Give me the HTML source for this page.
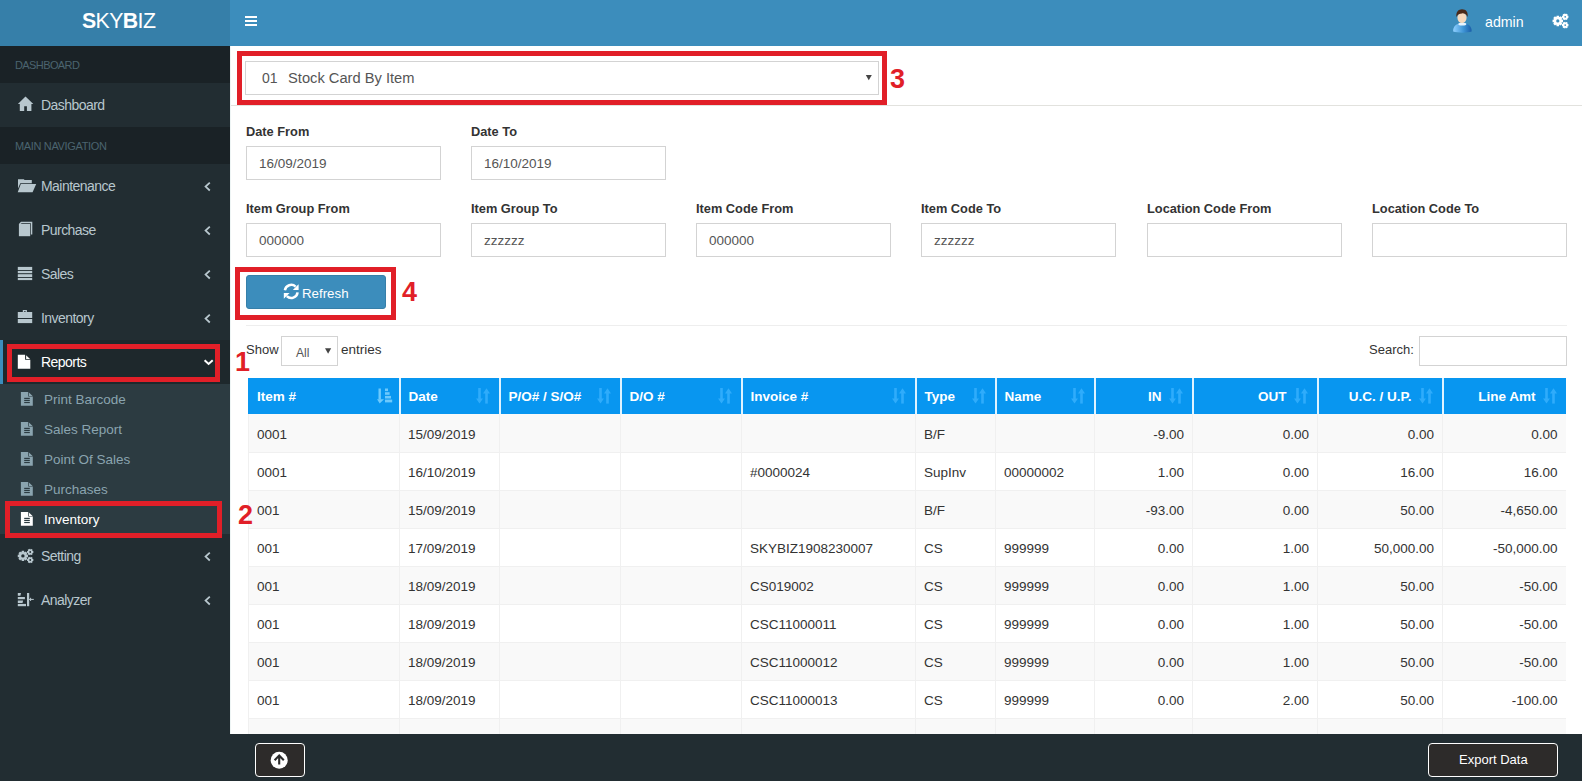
<!DOCTYPE html>
<html><head><meta charset="utf-8">
<style>
*{box-sizing:border-box;margin:0;padding:0}
html,body{width:1582px;height:781px;overflow:hidden;background:#fff;font-family:"Liberation Sans",sans-serif;color:#333}
.a{position:absolute}
.t{position:absolute;white-space:nowrap;line-height:20px}
#logo{left:0;top:0;width:230px;height:46px;background:#367fa9}
#nav{left:230px;top:0;width:1352px;height:46px;background:#3c8dbc}
#side{left:0;top:46px;width:230px;height:735px;background:#222d32}
.hdr{left:0;width:230px;height:37px;background:#1a2226}
.hdr span{position:absolute;left:15px;top:9px;font-size:11px;line-height:20px;color:#4b646f;letter-spacing:-0.6px}
.mi{left:0;width:230px;height:44px}
.mi .tx{position:absolute;left:41px;top:12px;font-size:14px;line-height:20px;color:#b8c7ce;letter-spacing:-0.55px}
.mi svg.ic{position:absolute}
.chev{position:absolute;left:203px;top:17px}
.sub{left:0;width:230px;height:30px}
.sub .tx{position:absolute;left:44px;top:6px;font-size:13.5px;line-height:20px;color:#8aa4af}
.sub svg{position:absolute;left:21px;top:8px}
.red{position:absolute;border:5px solid #e11f28}
.num{position:absolute;font-weight:bold;font-size:27px;line-height:30px;color:#e11f28}
.lbl{position:absolute;font-size:12.8px;font-weight:bold;line-height:20px;color:#333}
.inp{position:absolute;width:195px;height:34px;border:1px solid #d3d3d3;background:#fff}
.inp span{position:absolute;left:12px;top:7px;font-size:13.5px;line-height:20px;color:#555}
#tbl{border-collapse:collapse;table-layout:fixed;width:1317px;font-size:13.5px}
#tbl th{height:36px;background:#0896f0;color:#fff;font-weight:bold;text-align:left;padding:0 30px 0 8px;border-left:2px solid #dff3ff;position:relative;white-space:nowrap}
#tbl th:first-child{border-left:1px solid #0896f0}
#tbl th.r,#tbl td.r{text-align:right}
#tbl td{height:38px;padding:3px 8px 0 8px;border-left:1px solid #f0f0f0;border-bottom:1px solid #f0f0f0;color:#333;white-space:nowrap}
#tbl tr.odd td{background:#f9f9f9}
</style></head><body>
<div id="logo" class="a"><span class="t" style="left:82px;top:10.5px;font-size:21.3px;color:#fff;letter-spacing:-0.6px"><b>S</b>KY<b>B</b>IZ</span></div>
<div id="nav" class="a">
  <div class="a" style="left:15px;top:16px;width:12px;height:2px;background:#fff"></div>
  <div class="a" style="left:15px;top:20px;width:12px;height:2px;background:#fff"></div>
  <div class="a" style="left:15px;top:24px;width:12px;height:2px;background:#fff"></div>
  <span class="t" style="left:1255px;top:12px;font-size:14.2px;color:#fff">admin</span>
</div>
<svg class="a" style="left:1440px;top:0" width="142" height="46" viewBox="1440 0 142 46"><defs><linearGradient id="bd" x1="0" x2="1" y1="0" y2="0"><stop offset="0" stop-color="#8fd0ff"/><stop offset="0.55" stop-color="#3f95d6"/><stop offset="1" stop-color="#1a5ea8"/></linearGradient></defs><path fill="url(#bd)" d="M1453.2 31.5C1452.8 26.5 1456 23.2 1462.3 23.2C1468.6 23.2 1472 26.5 1471.6 31.5C1468 33 1457 33 1453.2 31.5Z"/><ellipse cx="1462.3" cy="24" rx="4" ry="1.6" fill="#e8f4ff"/><ellipse cx="1462" cy="17.8" rx="4.6" ry="5.2" fill="#f6d9bd"/><path fill="#4a2a1a" d="M1456.4 17C1455.8 12 1458.5 9.3 1462 9.3C1466 9.3 1468.3 12 1467.6 17C1466.5 14 1464 13.2 1462 13.4C1459.6 13.4 1457.4 14.5 1456.4 17Z"/><path fill="#fff" fill-rule="evenodd" d="M1563.05 19.64L1563.05 22.16L1561.77 22.28L1561.58 22.73L1562.40 23.72L1560.62 25.50L1559.63 24.68L1559.18 24.87L1559.06 26.15L1556.54 26.15L1556.42 24.87L1555.97 24.68L1554.98 25.50L1553.20 23.72L1554.02 22.73L1553.83 22.28L1552.55 22.16L1552.55 19.64L1553.83 19.52L1554.02 19.07L1553.20 18.08L1554.98 16.30L1555.97 17.12L1556.42 16.93L1556.54 15.65L1559.06 15.65L1559.18 16.93L1559.63 17.12L1560.62 16.30L1562.40 18.08L1561.58 19.07L1561.77 19.52ZM1559.40 20.90A1.6 1.6 0 1 0 1556.20 20.90A1.6 1.6 0 1 0 1559.40 20.90Z"/><path fill="#fff" fill-rule="evenodd" d="M1568.43 15.75L1568.43 17.85L1567.64 17.96L1567.43 18.33L1567.73 19.08L1565.91 20.13L1565.41 19.49L1564.99 19.49L1564.49 20.13L1562.67 19.08L1562.97 18.33L1562.76 17.96L1561.97 17.85L1561.97 15.75L1562.76 15.64L1562.97 15.27L1562.67 14.52L1564.49 13.47L1564.99 14.11L1565.41 14.11L1565.91 13.47L1567.73 14.52L1567.43 15.27L1567.64 15.64ZM1566.05 16.80A0.85 0.85 0 1 0 1564.35 16.80A0.85 0.85 0 1 0 1566.05 16.80Z"/><path fill="#fff" fill-rule="evenodd" d="M1568.43 24.05L1568.43 26.15L1567.64 26.26L1567.43 26.63L1567.73 27.38L1565.91 28.43L1565.41 27.79L1564.99 27.79L1564.49 28.43L1562.67 27.38L1562.97 26.63L1562.76 26.26L1561.97 26.15L1561.97 24.05L1562.76 23.94L1562.97 23.57L1562.67 22.82L1564.49 21.77L1564.99 22.41L1565.41 22.41L1565.91 21.77L1567.73 22.82L1567.43 23.57L1567.64 23.94ZM1566.05 25.10A0.85 0.85 0 1 0 1564.35 25.10A0.85 0.85 0 1 0 1566.05 25.10Z"/></svg>
<div id="side" class="a"></div>
<div class="a hdr" style="top:46px"><span>DASHBOARD</span></div>
<div class="a mi" style="top:83px"><span class="tx">Dashboard</span></div>
<div class="a hdr" style="top:127px"><span style="letter-spacing:-0.35px">MAIN NAVIGATION</span></div>
<div class="a mi" style="top:164px"><span class="tx">Maintenance</span></div>
<div class="a mi" style="top:208px"><span class="tx">Purchase</span></div>
<div class="a mi" style="top:252px"><span class="tx">Sales</span></div>
<div class="a mi" style="top:296px"><span class="tx">Inventory</span></div>
<div class="a mi" style="top:340px;background:#1e282c;border-left:3px solid #3c8dbc"><span class="tx" style="left:38px;color:#fff">Reports</span></div>
<div class="a" style="left:0;top:384px;width:230px;height:150px;background:#2c3b41"></div>
<div class="a sub" style="top:384px"><span class="tx">Print Barcode</span></div>
<div class="a sub" style="top:414px"><span class="tx">Sales Report</span></div>
<div class="a sub" style="top:444px"><span class="tx">Point Of Sales</span></div>
<div class="a sub" style="top:474px"><span class="tx">Purchases</span></div>
<div class="a sub" style="top:504px"><span class="tx" style="color:#fff">Inventory</span></div>
<div class="a mi" style="top:534px"><span class="tx">Setting</span></div>
<div class="a mi" style="top:578px"><span class="tx">Analyzer</span></div>

<svg class="a" style="left:0;top:0" width="230" height="781" viewBox="0 0 230 781">
<g fill="#b8c7ce">
<path d="M25.5 96.6L17.9 104H19.8V111H24.2V106.3H26.9V111H31.4V104H33.3Z"/>
<path d="M18 179.3H23.8L24.6 180.1H31.8V183.2H20.3L18 188.5Z"/>
<path d="M20.8 184H36.2L32.6 192.2H17.7Z"/>
<path d="M18.9 224L21 221.8H32.3V234.6H30.9V223.2H21.7L20.5 224Z"/>
<rect x="18.9" y="224" width="11.3" height="12.2"/>
<rect x="17.8" y="266.9" width="14.4" height="3.1"/>
<rect x="17.8" y="270.9" width="14.4" height="2.3"/>
<rect x="17.8" y="274.2" width="14.4" height="2.9"/>
<rect x="17.8" y="278" width="14.4" height="2.1"/>
<path d="M22.8 310H26.9V312H32.2V317.9H17.8V312H22.8ZM24 311.2V312H25.7V311.2Z" fill-rule="evenodd"/>
<rect x="17.8" y="319" width="14.4" height="4.1"/>

<path fill="#b8c7ce" fill-rule="evenodd" d="M28.05 554.66L28.05 557.14L26.77 557.24L26.59 557.69L27.42 558.67L25.67 560.42L24.69 559.59L24.24 559.77L24.14 561.05L21.66 561.05L21.56 559.77L21.11 559.59L20.13 560.42L18.38 558.67L19.21 557.69L19.03 557.24L17.75 557.14L17.75 554.66L19.03 554.56L19.21 554.11L18.38 553.13L20.13 551.38L21.11 552.21L21.56 552.03L21.66 550.75L24.14 550.75L24.24 552.03L24.69 552.21L25.67 551.38L27.42 553.13L26.59 554.11L26.77 554.56ZM24.60 555.90A1.7 1.7 0 1 0 21.20 555.90A1.7 1.7 0 1 0 24.60 555.90Z"/><path fill="#b8c7ce" fill-rule="evenodd" d="M33.34 550.98L33.34 553.02L32.55 553.12L32.34 553.47L32.65 554.21L30.89 555.23L30.40 554.59L30.00 554.59L29.51 555.23L27.75 554.21L28.06 553.47L27.85 553.12L27.06 553.02L27.06 550.98L27.85 550.88L28.06 550.53L27.75 549.79L29.51 548.77L30.00 549.41L30.40 549.41L30.89 548.77L32.65 549.79L32.34 550.53L32.55 550.88ZM31.10 552.00A0.9 0.9 0 1 0 29.30 552.00A0.9 0.9 0 1 0 31.10 552.00Z"/><path fill="#b8c7ce" fill-rule="evenodd" d="M33.34 558.98L33.34 561.02L32.55 561.12L32.34 561.47L32.65 562.21L30.89 563.23L30.40 562.59L30.00 562.59L29.51 563.23L27.75 562.21L28.06 561.47L27.85 561.12L27.06 561.02L27.06 558.98L27.85 558.88L28.06 558.53L27.75 557.79L29.51 556.77L30.00 557.41L30.40 557.41L30.89 556.77L32.65 557.79L32.34 558.53L32.55 558.88ZM31.10 560.00A0.9 0.9 0 1 0 29.30 560.00A0.9 0.9 0 1 0 31.10 560.00Z"/><path d="M17.8 593.1H21L20.4 595.8H17.8Z"/>
<rect x="17.8" y="597" width="7.1" height="2.2"/>
<path d="M17.8 600.5H23.1L22.5 603H17.8Z"/>
<rect x="17.8" y="603.9" width="8.2" height="2.3"/>
<rect x="27" y="593" width="2.2" height="13.2"/>
<rect x="29" y="598.9" width="4.8" height="1"/>
<rect x="30.1" y="597.8" width="1" height="3.2"/>
</g>
<g fill="none" stroke="#b8c7ce" stroke-width="1.8">
<path d="M209.8 182.7L205.6 186.6L209.8 190.5"/>
<path d="M209.8 226.7L205.6 230.6L209.8 234.5"/>
<path d="M209.8 270.7L205.6 274.6L209.8 278.5"/>
<path d="M209.8 314.7L205.6 318.6L209.8 322.5"/>
<path d="M209.8 552.7L205.6 556.6L209.8 560.5"/>
<path d="M209.8 596.7L205.6 600.6L209.8 604.5"/>
<path d="M204.6 360.2L208.6 364L212.7 360.2" stroke="#fff" stroke-width="2"/>
</g>
<path fill="#fff" d="M17.8 354.8H25.1V359.8H30.3V368.8H17.8Z"/>
<path fill="#fff" d="M26.1 355.3L30.1 359.1H26.1Z"/>
<g transform="translate(0 0.0)"><path fill="#8aa4af" d="M20.9 391.9H28.2V396.6H32.8V405.8H20.9Z"/><path fill="#8aa4af" d="M28.9 392.4L32.6 396H28.9Z"/><g fill="#2c3b41"><rect x="24.2" y="397.8" width="5.6" height="1.2"/><rect x="24.2" y="399.8" width="5.6" height="1.2"/><rect x="24.2" y="401.9" width="5.6" height="1.2"/></g></g>
<g transform="translate(0 30.0)"><path fill="#8aa4af" d="M20.9 391.9H28.2V396.6H32.8V405.8H20.9Z"/><path fill="#8aa4af" d="M28.9 392.4L32.6 396H28.9Z"/><g fill="#2c3b41"><rect x="24.2" y="397.8" width="5.6" height="1.2"/><rect x="24.2" y="399.8" width="5.6" height="1.2"/><rect x="24.2" y="401.9" width="5.6" height="1.2"/></g></g>
<g transform="translate(0 60.0)"><path fill="#8aa4af" d="M20.9 391.9H28.2V396.6H32.8V405.8H20.9Z"/><path fill="#8aa4af" d="M28.9 392.4L32.6 396H28.9Z"/><g fill="#2c3b41"><rect x="24.2" y="397.8" width="5.6" height="1.2"/><rect x="24.2" y="399.8" width="5.6" height="1.2"/><rect x="24.2" y="401.9" width="5.6" height="1.2"/></g></g>
<g transform="translate(0 90.0)"><path fill="#8aa4af" d="M20.9 391.9H28.2V396.6H32.8V405.8H20.9Z"/><path fill="#8aa4af" d="M28.9 392.4L32.6 396H28.9Z"/><g fill="#2c3b41"><rect x="24.2" y="397.8" width="5.6" height="1.2"/><rect x="24.2" y="399.8" width="5.6" height="1.2"/><rect x="24.2" y="401.9" width="5.6" height="1.2"/></g></g>
<g transform="translate(0 120.0)"><path fill="#fff" d="M20.9 391.9H28.2V396.6H32.8V405.8H20.9Z"/><path fill="#fff" d="M28.9 392.4L32.6 396H28.9Z"/><g fill="#2c3b41"><rect x="24.2" y="397.8" width="5.6" height="1.2"/><rect x="24.2" y="399.8" width="5.6" height="1.2"/><rect x="24.2" y="401.9" width="5.6" height="1.2"/></g></g>
</svg>
<!-- content -->
<div class="a" style="left:230px;top:46px;width:1px;height:688px;background:#eef5f5"></div>
<div class="a" style="left:231px;top:105px;width:1351px;height:1px;background:#e2e2de"></div>
<div class="a" style="left:245px;top:61px;width:634px;height:34px;border:1px solid #d3d3d3"></div>
<span class="t" style="left:262px;top:68px;font-size:14px;color:#555">01</span>
<span class="t" style="left:288px;top:68px;font-size:14.7px;color:#555">Stock Card By Item</span>

<span class="lbl" style="left:246px;top:122px">Date From</span>
<div class="inp" style="left:246px;top:146px"><span>16/09/2019</span></div>
<span class="lbl" style="left:471px;top:122px">Date To</span>
<div class="inp" style="left:471px;top:146px"><span>16/10/2019</span></div>
<span class="lbl" style="left:246px;top:199px">Item Group From</span>
<div class="inp" style="left:246px;top:223px"><span>000000</span></div>
<span class="lbl" style="left:471px;top:199px">Item Group To</span>
<div class="inp" style="left:471px;top:223px"><span>zzzzzz</span></div>
<span class="lbl" style="left:696px;top:199px">Item Code From</span>
<div class="inp" style="left:696px;top:223px"><span>000000</span></div>
<span class="lbl" style="left:921px;top:199px">Item Code To</span>
<div class="inp" style="left:921px;top:223px"><span>zzzzzz</span></div>
<span class="lbl" style="left:1147px;top:199px">Location Code From</span>
<div class="inp" style="left:1147px;top:223px"><span></span></div>
<span class="lbl" style="left:1372px;top:199px">Location Code To</span>
<div class="inp" style="left:1372px;top:223px"><span></span></div>
<div class="a" style="left:246px;top:275px;width:140px;height:34px;background:#3c8dbc;border:1px solid #367fa9;border-radius:3px"></div>
<span class="t" style="left:302px;top:284px;font-size:13.3px;color:#fff">Refresh</span>
<div class="a" style="left:246px;top:325px;width:1321px;height:1px;background:#eee"></div>
<span class="t" style="left:246px;top:340px;font-size:13px;color:#333">Show</span>
<div class="a" style="left:281px;top:336px;width:57px;height:30px;border:1px solid #d3d3d3"></div>
<span class="t" style="left:296px;top:343px;font-size:12px;color:#555">All</span>
<span class="t" style="left:341px;top:340px;font-size:13.5px;color:#333">entries</span>
<span class="t" style="left:1369px;top:340px;font-size:13px;color:#333">Search:</span>
<div class="a" style="left:1419px;top:336px;width:148px;height:30px;border:1px solid #d3d3d3"></div>
<table id="tbl" class="a" style="left:248px;top:378px">
<colgroup>
<col style="width:151px">
<col style="width:100px">
<col style="width:121px">
<col style="width:121px">
<col style="width:174px">
<col style="width:80px">
<col style="width:99px">
<col style="width:98px">
<col style="width:125px">
<col style="width:125px">
<col style="width:123px">
</colgroup><thead><tr>
<th class="">Item #<i></i></th>
<th class="">Date<i></i></th>
<th class="">P/O# / S/O#<i></i></th>
<th class="">D/O #<i></i></th>
<th class="">Invoice #<i></i></th>
<th class="">Type<i></i></th>
<th class="">Name<i></i></th>
<th class="r">IN<i></i></th>
<th class="r">OUT<i></i></th>
<th class="r">U.C. / U.P.<i></i></th>
<th class="r">Line Amt<i></i></th>
</tr></thead><tbody>
<tr class="odd"><td class="">0001</td><td class="">15/09/2019</td><td class=""></td><td class=""></td><td class=""></td><td class="">B/F</td><td class=""></td><td class="r">-9.00</td><td class="r">0.00</td><td class="r">0.00</td><td class="r">0.00</td></tr>
<tr class=""><td class="">0001</td><td class="">16/10/2019</td><td class=""></td><td class=""></td><td class="">#0000024</td><td class="">SupInv</td><td class="">00000002</td><td class="r">1.00</td><td class="r">0.00</td><td class="r">16.00</td><td class="r">16.00</td></tr>
<tr class="odd"><td class="">001</td><td class="">15/09/2019</td><td class=""></td><td class=""></td><td class=""></td><td class="">B/F</td><td class=""></td><td class="r">-93.00</td><td class="r">0.00</td><td class="r">50.00</td><td class="r">-4,650.00</td></tr>
<tr class=""><td class="">001</td><td class="">17/09/2019</td><td class=""></td><td class=""></td><td class="">SKYBIZ1908230007</td><td class="">CS</td><td class="">999999</td><td class="r">0.00</td><td class="r">1.00</td><td class="r">50,000.00</td><td class="r">-50,000.00</td></tr>
<tr class="odd"><td class="">001</td><td class="">18/09/2019</td><td class=""></td><td class=""></td><td class="">CS019002</td><td class="">CS</td><td class="">999999</td><td class="r">0.00</td><td class="r">1.00</td><td class="r">50.00</td><td class="r">-50.00</td></tr>
<tr class=""><td class="">001</td><td class="">18/09/2019</td><td class=""></td><td class=""></td><td class="">CSC11000011</td><td class="">CS</td><td class="">999999</td><td class="r">0.00</td><td class="r">1.00</td><td class="r">50.00</td><td class="r">-50.00</td></tr>
<tr class="odd"><td class="">001</td><td class="">18/09/2019</td><td class=""></td><td class=""></td><td class="">CSC11000012</td><td class="">CS</td><td class="">999999</td><td class="r">0.00</td><td class="r">1.00</td><td class="r">50.00</td><td class="r">-50.00</td></tr>
<tr class=""><td class="">001</td><td class="">18/09/2019</td><td class=""></td><td class=""></td><td class="">CSC11000013</td><td class="">CS</td><td class="">999999</td><td class="r">0.00</td><td class="r">2.00</td><td class="r">50.00</td><td class="r">-100.00</td></tr>
<tr class="odd"><td class=""></td><td class=""></td><td class=""></td><td class=""></td><td class=""></td><td class=""></td><td class=""></td><td class="r"></td><td class="r"></td><td class="r"></td><td class="r"></td></tr>
</tbody></table>
<div id="footer" class="a" style="left:0;top:734px;width:1582px;height:47px;background:#222d32"></div>

<svg class="a" style="left:0;top:0;pointer-events:none" width="1582" height="781" viewBox="0 0 1582 781">
<g fill="#7fd3ff" opacity="0.85"><rect x="378.5" y="388.5" width="2.4" height="11"/><path d="M377 399.2H384L379.7 403.5Z"/><rect x="385" y="388.5" width="3" height="2.6"/><rect x="385" y="392.2" width="4.6" height="2.6"/><rect x="385" y="395.9" width="6" height="2.6"/><rect x="385" y="399.6" width="7.2" height="2.8"/></g>
<g fill="#3db4ff" opacity="0.75"><rect x="478.2" y="388" width="2.6" height="11"/><path d="M476 398.5H483L479.5 403.6Z"/><rect x="485.2" y="393" width="2.6" height="10.6"/><path d="M483 393.4H490L486.5 388.3Z"/></g>
<g fill="#3db4ff" opacity="0.75"><rect x="599.2" y="388" width="2.6" height="11"/><path d="M597 398.5H604L600.5 403.6Z"/><rect x="606.2" y="393" width="2.6" height="10.6"/><path d="M604 393.4H611L607.5 388.3Z"/></g>
<g fill="#3db4ff" opacity="0.75"><rect x="720.2" y="388" width="2.6" height="11"/><path d="M718 398.5H725L721.5 403.6Z"/><rect x="727.2" y="393" width="2.6" height="10.6"/><path d="M725 393.4H732L728.5 388.3Z"/></g>
<g fill="#3db4ff" opacity="0.75"><rect x="894.2" y="388" width="2.6" height="11"/><path d="M892 398.5H899L895.5 403.6Z"/><rect x="901.2" y="393" width="2.6" height="10.6"/><path d="M899 393.4H906L902.5 388.3Z"/></g>
<g fill="#3db4ff" opacity="0.75"><rect x="974.2" y="388" width="2.6" height="11"/><path d="M972 398.5H979L975.5 403.6Z"/><rect x="981.2" y="393" width="2.6" height="10.6"/><path d="M979 393.4H986L982.5 388.3Z"/></g>
<g fill="#3db4ff" opacity="0.75"><rect x="1073.2" y="388" width="2.6" height="11"/><path d="M1071 398.5H1078L1074.5 403.6Z"/><rect x="1080.2" y="393" width="2.6" height="10.6"/><path d="M1078 393.4H1085L1081.5 388.3Z"/></g>
<g fill="#3db4ff" opacity="0.75"><rect x="1171.2" y="388" width="2.6" height="11"/><path d="M1169 398.5H1176L1172.5 403.6Z"/><rect x="1178.2" y="393" width="2.6" height="10.6"/><path d="M1176 393.4H1183L1179.5 388.3Z"/></g>
<g fill="#3db4ff" opacity="0.75"><rect x="1296.2" y="388" width="2.6" height="11"/><path d="M1294 398.5H1301L1297.5 403.6Z"/><rect x="1303.2" y="393" width="2.6" height="10.6"/><path d="M1301 393.4H1308L1304.5 388.3Z"/></g>
<g fill="#3db4ff" opacity="0.75"><rect x="1421.2" y="388" width="2.6" height="11"/><path d="M1419 398.5H1426L1422.5 403.6Z"/><rect x="1428.2" y="393" width="2.6" height="10.6"/><path d="M1426 393.4H1433L1429.5 388.3Z"/></g>
<g fill="#3db4ff" opacity="0.75"><rect x="1545.2" y="388" width="2.6" height="11"/><path d="M1543 398.5H1550L1546.5 403.6Z"/><rect x="1552.2" y="393" width="2.6" height="10.6"/><path d="M1550 393.4H1557L1553.5 388.3Z"/></g>
<g fill="none" stroke="#fff" stroke-width="2.5"><path d="M284.9 290.3A6.4 6.4 0 0 1 295.6 286.6"/><path d="M297.6 292.4A6.4 6.4 0 0 1 286.8 296.2"/></g><path fill="#fff" d="M298.6 284.2V290H292.8Z"/><path fill="#fff" d="M283.8 298.7V292.9H289.6Z"/>
<path fill="#444" d="M865.8 75H871.8L868.8 80.2Z"/>
<path fill="#444" d="M325 348.2H331.2L328.1 353.8Z"/>
</svg>
<div class="a" style="left:255px;top:743px;width:50px;height:34px;background:#2d2b2a;border:1.5px solid #fff;border-radius:4px"></div>
<svg class="a" style="left:268px;top:749px" width="23" height="23" viewBox="268 749 23 23"><circle cx="279.2" cy="760.2" r="8.5" fill="#fff"/><path d="M274.6 760.2L279.2 755.6L283.8 760.2M279.2 755.8V764.6" fill="none" stroke="#2b2b2b" stroke-width="2.1"/></svg>
<div class="a" style="left:1428px;top:743px;width:130px;height:34px;background:#2d2b2a;border:1.5px solid #fff;border-radius:4px"></div>
<span class="t" style="left:1459px;top:750px;font-size:13px;color:#fff">Export Data</span>
<div class="red" style="left:7px;top:344px;width:213px;height:38px"></div>
<div class="red" style="left:5px;top:501px;width:217px;height:37px"></div>
<div class="red" style="left:237px;top:51px;width:650px;height:54px"></div>
<div class="red" style="left:235px;top:267px;width:161px;height:53px"></div>
<span class="num" style="left:235px;top:347px">1</span>
<span class="num" style="left:238px;top:500px">2</span>
<span class="num" style="left:890px;top:64px">3</span>
<span class="num" style="left:402px;top:277px">4</span>
</body></html>
